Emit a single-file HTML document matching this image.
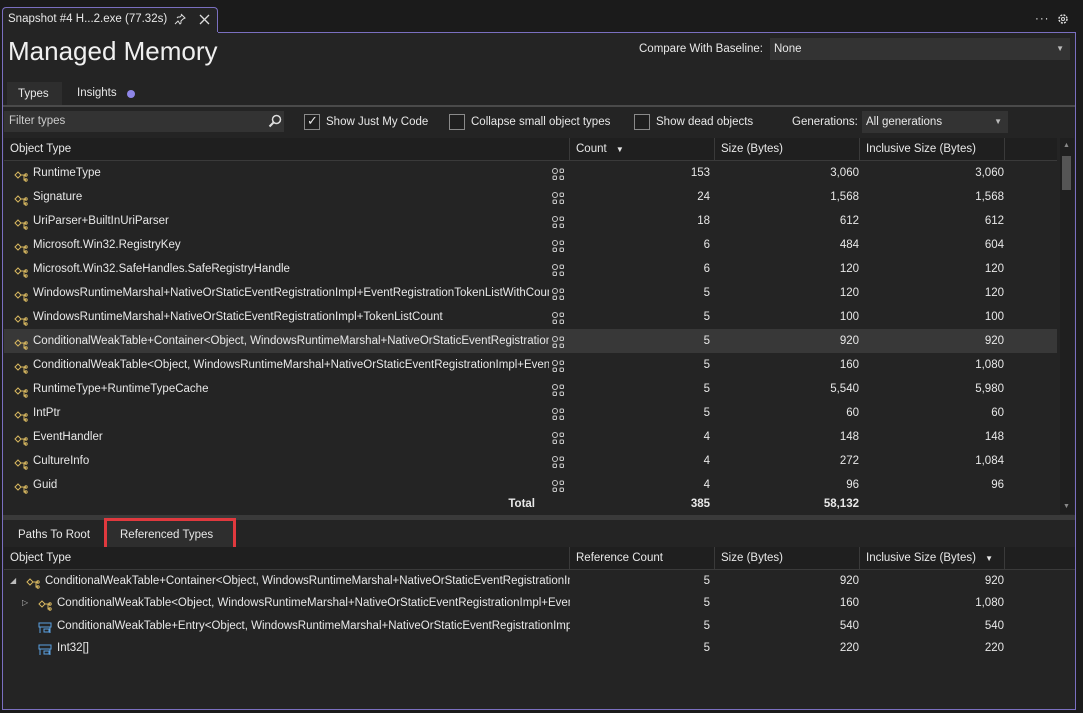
<!DOCTYPE html>
<html><head><style>
*{box-sizing:border-box;margin:0;padding:0}
body{width:1083px;height:713px;background:#1b1b1b;font-family:"Liberation Sans",sans-serif;font-size:11.5px;color:#e8e8e8;position:relative;overflow:hidden}
.abs{position:absolute}
.frame{left:2px;top:32px;width:1074px;height:678px;border:1px solid #7a6fc0;border-top:none;background:#242424}
.tab{left:2px;top:7px;width:216px;height:26px;border:1px solid #7a6fc0;border-bottom:none;border-radius:4px 4px 0 0;background:#242424}
.topline{left:218px;top:32px;width:858px;height:1px;background:#7a6fc0}
.row{position:absolute;left:4px;width:1053px;height:24px;line-height:24px}
.c{position:absolute;top:0;text-align:right}
.hdr{position:absolute;background:#1f1f1f;height:23px;line-height:23px;border-bottom:1px solid #3a3a3a}
.hc{position:absolute;top:0;height:23px;border-right:1px solid #3a3a3a;padding-left:6px}
.ic{position:absolute;top:6px}
.chk{position:absolute;width:16px;height:16px;border:1px solid #8a8a8a;background:#1f1f1f}
</style></head><body>
<div class="abs tab"></div>
<div class="abs" style="left:8px;top:13px;font-size:11.5px">Snapshot #4 H...2.exe (77.32s)</div>
<svg class="abs" style="left:174px;top:13px" width="12" height="12" viewBox="0 0 12 12"><path d="M7 1l4 4-2 1-2 2 0 2-1 1-2-3-3 3M3 5l1-1 2 0 2-2" stroke="#ddd" fill="none"/></svg>
<svg class="abs" style="left:199px;top:14px" width="11" height="11"><path d="M1 1l9 9M10 1l-9 9" stroke="#ddd" stroke-width="1.3"/></svg>
<div class="abs" style="left:1035px;top:13px;letter-spacing:1px">···</div>
<svg class="abs" style="left:1057px;top:13px" width="12" height="12" viewBox="0 0 12 12"><circle cx="6" cy="6" r="4" stroke="#ddd" fill="none" stroke-width="1.5" stroke-dasharray="2 1.2"/><circle cx="6" cy="6" r="1.5" stroke="#ddd" fill="none"/></svg>
<div class="abs frame"></div>
<div class="abs topline"></div>
<div class="abs" style="left:8px;top:36px;font-size:26px;color:#f0f0f0">Managed Memory</div>
<div class="abs" style="left:639px;top:43px">Compare With Baseline:</div>
<div class="abs" style="left:770px;top:38px;width:300px;height:22px;background:#333;line-height:22px;padding-left:4px">None<span style="position:absolute;right:6px;top:0;font-size:8px;color:#bbb">▼</span></div>
<div class="abs" style="left:7px;top:82px;width:55px;height:24px;background:#2e2e2e"></div>
<div class="abs" style="left:18px;top:88px">Types</div>
<div class="abs" style="left:77px;top:87px">Insights</div>
<div class="abs" style="left:127px;top:90px;width:8px;height:8px;border-radius:50%;background:#8f86e8"></div>
<div class="abs" style="left:3px;top:105px;width:1072px;height:2px;background:#4a4a4a"></div>
<div class="abs" style="left:4px;top:111px;width:280px;height:21px;background:#333;line-height:21px;padding-left:5px;color:#ccc">Filter types</div>
<svg class="abs" style="left:268px;top:114px" width="14" height="14"><circle cx="8.5" cy="5.5" r="4" stroke="#ddd" fill="none" stroke-width="1.5"/><path d="M5.5 8.5L1.5 12.5" stroke="#ddd" stroke-width="2"/></svg>
<div class="chk" style="left:304px;top:114px"></div><div class="abs" style="left:307px;top:113px;font-size:13px">✓</div>
<div class="abs" style="left:326px;top:116px">Show Just My Code</div>
<div class="chk" style="left:449px;top:114px"></div>
<div class="abs" style="left:471px;top:116px">Collapse small object types</div>
<div class="chk" style="left:634px;top:114px"></div>
<div class="abs" style="left:656px;top:116px">Show dead objects</div>
<div class="abs" style="left:792px;top:116px">Generations:</div>
<div class="abs" style="left:862px;top:111px;width:146px;height:22px;background:#333;line-height:22px;padding-left:4px">All generations<span style="position:absolute;right:6px;top:0;font-size:8px;color:#bbb">▼</span></div>

<div class="hdr" style="left:4px;top:138px;width:1053px">
<div class="hc" style="left:0;width:566px">Object Type</div>
<div class="hc" style="left:566px;width:145px">Count <span style="font-size:8px;margin-left:6px">▼</span></div>
<div class="hc" style="left:711px;width:145px">Size (Bytes)</div>
<div class="hc" style="left:856px;width:145px">Inclusive Size (Bytes)</div>
</div>
<div class="abs" style="left:1060px;top:138px;width:14px;height:376px;background:#1f1f1f"></div>
<div class="abs" style="left:1062px;top:156px;width:9px;height:34px;background:#555"></div>
<div class="abs" style="left:1063px;top:142px;font-size:7px;color:#888">▲</div>
<div class="abs" style="left:1063px;top:503px;font-size:7px;color:#888">▼</div>

<div id="rows"></div>
<div class="abs" style="left:3px;top:515px;width:1072px;height:5px;background:#3a3a3a"></div>
<div class="abs" style="left:18px;top:529px">Paths To Root</div>
<div class="abs" style="left:104px;top:518px;width:132px;height:32px;background:#2e2e2e;border:3px solid #e0393e"></div>
<div class="abs" style="left:120px;top:529px">Referenced Types</div>
<div class="hdr" style="left:4px;top:547px;width:1071px">
<div class="hc" style="left:0;width:566px">Object Type</div>
<div class="hc" style="left:566px;width:145px">Reference Count</div>
<div class="hc" style="left:711px;width:145px">Size (Bytes)</div>
<div class="hc" style="left:856px;width:145px">Inclusive Size (Bytes) <span style="font-size:8px;margin-left:6px">▼</span></div>
</div>
<div id="rows2"></div>
<script>
var cls='<svg width="14" height="12" viewBox="0 0 14 12"><path d="M1 5l3-3 3 3-3 3z" stroke="#d8b860" fill="none"/><path d="M7 5h3v5h2M10 5h2" stroke="#d8b860" fill="none"/><circle cx="12" cy="5" r="1.2" stroke="#d8b860" fill="none"/><circle cx="12" cy="10" r="1.2" stroke="#d8b860" fill="none"/></svg>';
var grid='<svg width="14" height="14" viewBox="0 0 14 14" fill="none" stroke="#ccc"><circle cx="4" cy="4" r="2.5"/><rect x="9" y="2" width="3.5" height="3.5" rx="1"/><rect x="2" y="9" width="3.5" height="3.5" rx="1"/><rect x="9" y="9" width="3.5" height="3.5" rx="1"/></svg>';
var st='<svg width="14" height="12" viewBox="0 0 14 12" fill="none" stroke="#5aa0e0"><rect x="1" y="1" width="12" height="4"/><path d="M2 5v6M12 5v6M6 7h5v3H6z"/></svg>';
var d=[["RuntimeType",153,"3,060","3,060"],["Signature",24,"1,568","1,568"],["UriParser+BuiltInUriParser",18,"612","612"],["Microsoft.Win32.RegistryKey",6,"484","604"],["Microsoft.Win32.SafeHandles.SafeRegistryHandle",6,"120","120"],["WindowsRuntimeMarshal+NativeOrStaticEventRegistrationImpl+EventRegistrationTokenListWithCount",5,"120","120"],["WindowsRuntimeMarshal+NativeOrStaticEventRegistrationImpl+TokenListCount",5,"100","100"],["ConditionalWeakTable+Container&lt;Object, WindowsRuntimeMarshal+NativeOrStaticEventRegistrationImpl&gt;",5,"920","920"],["ConditionalWeakTable&lt;Object, WindowsRuntimeMarshal+NativeOrStaticEventRegistrationImpl+EventCacheKey&gt;",5,"160","1,080"],["RuntimeType+RuntimeTypeCache",5,"5,540","5,980"],["IntPtr",5,"60","60"],["EventHandler",4,"148","148"],["CultureInfo",4,"272","1,084"],["Guid",4,"96","96"]];
var h='';
d.forEach(function(r,i){var y=161+i*24;h+='<div class="row" style="top:'+y+'px;'+(i==7?'background:#383838':'')+'"><span class="ic" style="left:10px">'+cls+'</span><span style="position:absolute;left:29px;width:516px;overflow:hidden;white-space:nowrap">'+r[0]+'</span><span class="ic" style="left:547px;top:5px">'+grid+'</span><span class="c" style="left:566px;width:140px">'+r[1]+'</span><span class="c" style="left:711px;width:144px">'+r[2]+'</span><span class="c" style="left:856px;width:144px">'+r[3]+'</span></div>';});
h+='<div class="row" style="top:492px;font-weight:bold"><span class="c" style="left:400px;width:131px">Total</span><span class="c" style="left:566px;width:140px">385</span><span class="c" style="left:711px;width:144px">58,132</span></div>';
document.getElementById('rows').innerHTML=h;
var e=[[cls,"ConditionalWeakTable+Container&lt;Object, WindowsRuntimeMarshal+NativeOrStaticEventRegistrationImpl&gt;","920","920",0,"◢"],[cls,"ConditionalWeakTable&lt;Object, WindowsRuntimeMarshal+NativeOrStaticEventRegistrationImpl+EventCacheKey&gt;","160","1,080",12,"▷"],[st,"ConditionalWeakTable+Entry&lt;Object, WindowsRuntimeMarshal+NativeOrStaticEventRegistrationImpl&gt;","540","540",12,""],[st,"Int32[]","220","220",12,""]];
h='';
e.forEach(function(r,i){var y=570+i*22.3;h+='<div class="row" style="top:'+y+'px;height:22px;line-height:22px"><span style="position:absolute;left:'+(6+r[4])+'px;font-size:8px;color:#bbb">'+r[5]+'</span><span class="ic" style="left:'+(22+r[4])+'px;top:5px">'+r[0]+'</span><span style="position:absolute;left:'+(41+r[4])+'px;width:'+(525-r[4])+'px;overflow:hidden;white-space:nowrap">'+r[1]+'</span><span class="c" style="left:566px;width:140px">5</span><span class="c" style="left:711px;width:144px">'+r[2]+'</span><span class="c" style="left:856px;width:144px">'+r[3]+'</span></div>';});
document.getElementById('rows2').innerHTML=h;
</script>
</body></html>
